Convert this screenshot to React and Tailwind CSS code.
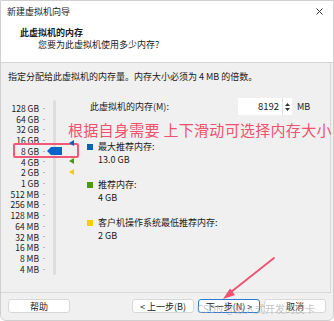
const SIZES = ["128 GB", "64 GB", "32 GB", "16 GB", "8 GB", "4 GB", "2 GB", "1 GB", "512 MB", "256 MB", "128 MB", "64 MB", "32 MB", "16 MB", "8 MB", "4 MB"];

const LEGEND = [
  { color: "bg-[#0a5fb4]", label: "最大推荐内存:", value: "13.0 GB", gap: "mt-0" },
  { color: "bg-[#4a9a0c]", label: "推荐内存:", value: "4 GB", gap: "mt-[12px]" },
  { color: "bg-[#f5cc00]", label: "客户机操作系统最低推荐内存:", value: "2 GB", gap: "mt-[12px]" },
];

function Btn({ children, focus }) {
  return (
    <button
      className={
        "h-[14px] w-[62px] rounded-[3px] bg-white text-[9px] leading-none text-[#222] " +
        (focus ? "border border-[#2a79d4]" : "border border-[#d8d8d8]")
      }
    >
      {children}
    </button>
  );
}

function Marker({ fill, top }) {
  return (
    <svg className={"absolute left-[68px] " + top} width="5" height="6" viewBox="0 0 5 6">
      <path d="M5 0V6L0 3Z" fill={fill} />
    </svg>
  );
}

export default function App() {
  return (
    <div
      className="relative flex h-[321px] w-[334px] flex-col overflow-hidden rounded-b-[6px] border border-[#cfcfcf] bg-[#f0f0f0] text-[9px] text-[#1a1a1a]"
      style={{ fontFamily: '"Noto Sans CJK SC", "Noto Sans", sans-serif' }}
    >
      {/* title bar */}
      <div className="flex h-[20px] shrink-0 items-center justify-between bg-white pl-[6px] pr-[10px]">
        <span className="text-[9px] leading-none">新建虚拟机向导</span>
        <svg width="7" height="7" viewBox="0 0 7 7" className="text-[#333]">
          <path d="M0.5 0.5L6.5 6.5M6.5 0.5L0.5 6.5" stroke="currentColor" strokeWidth="1" />
        </svg>
      </div>

      {/* header */}
      <div className="h-[42px] shrink-0 border-b border-[#d4d4d4] bg-white pl-[19px] pt-[6px] leading-[12px]">
        <p className="font-bold">此虚拟机的内存</p>
        <p className="pl-[18px]">您要为此虚拟机使用多少内存?</p>
      </div>

      {/* body */}
      <div className="mr-[2px] flex flex-1 flex-col border-b border-r border-[#d8d8d8]">
        <p className="pl-[7px] pt-[8px] leading-[12px]">指定分配给此虚拟机的内存量。内存大小必须为 4 MB 的倍数。</p>

        <div className="mt-[20px] flex">
          {/* slider column */}
          <div className="relative flex w-[80px] shrink-0">
            <div className="flex w-[38px] flex-col items-end">
              {SIZES.map((s) => (
                <span key={s} className="h-[10.73px] whitespace-nowrap text-[8.5px] leading-[10.73px] text-[#222]">{s}</span>
              ))}
            </div>
            <div className="ml-[4px] flex flex-col">
              {SIZES.map((s) => (
                <div key={s} className="flex h-[10.73px] items-center">
                  <div className="h-px w-[2px] bg-[#b8b8b8]" />
                </div>
              ))}
            </div>
            <div className="ml-[8px] mt-[-3px] h-[175px] w-[3px] rounded-[2px] bg-[#dedede]" />

            {/* overlays */}
            <div className="absolute left-[12px] top-[40px] h-[15px] w-[66px] rounded-[2px] border-2 border-[#f05a78]" />
            <svg className="absolute left-[46px] top-[44px]" width="15" height="8" viewBox="0 0 15 8">
              <path d="M4 0H15V8H4L0 4Z" fill="#0a63c9" />
            </svg>
            <Marker fill="#0a5fb4" top="top-[37px]" />
            <Marker fill="#4a9a0c" top="top-[55px]" />
            <Marker fill="#f5cc00" top="top-[66px]" />
          </div>

          {/* right content */}
          <div className="flex min-w-0 flex-1 flex-col">
            <div className="mt-[-5px] flex items-center pl-[9px]">
              <span className="w-[148px]">此虚拟机的内存(M):</span>
              <div className="flex h-[17px] items-center bg-white">
                <span className="w-[44px] pr-[3px] text-right text-[9.5px]">8192</span>
                <div className="flex h-[17px] w-[10px] flex-col items-center justify-center gap-[2px] border-l border-[#e0e0e0]">
                  <svg width="5" height="3" viewBox="0 0 5 3"><path d="M0 3L2.5 0L5 3Z" fill="#333" /></svg>
                  <svg width="5" height="3" viewBox="0 0 5 3"><path d="M0 0L2.5 3L5 0Z" fill="#333" /></svg>
                </div>
              </div>
              <span className="ml-[5px]">MB</span>
            </div>

            <p className="ml-[-13px] mt-[5px] whitespace-nowrap text-[15px] leading-[20px] tracking-[0.3px] text-[#f2506e]">根据自身需要 上下滑动可选择内存大小</p>

            <div className="flex flex-col pl-[6px]">
              {LEGEND.map((l) => (
                <div key={l.label} className={"flex " + l.gap}>
                  <div className={"mt-[4px] h-[6px] w-[6px] shrink-0 " + l.color} />
                  <div className="ml-[5px] flex flex-col leading-[13px]">
                    <span>{l.label}</span>
                    <span>{l.value}</span>
                  </div>
                </div>
              ))}
            </div>
          </div>
        </div>
      </div>

      {/* footer */}
      <div className="flex h-[27px] shrink-0 items-start px-[7px] pt-[6px]">
        <Btn>帮助</Btn>
        <div className="ml-auto flex gap-[4px]">
          <Btn>&lt; 上一步(B)</Btn>
          <Btn focus>下一步(N) &gt;</Btn>
          <Btn>取消</Btn>
        </div>
      </div>

      {/* annotation arrow */}
      <svg className="pointer-events-none absolute left-[215px] top-[255px]" width="62" height="50" viewBox="0 0 62 50">
        <path d="M58 2L15 36" stroke="#f2506e" strokeWidth="1.8" strokeLinecap="round" />
        <path d="M7 43L19 39L14 32.5Z" fill="#f2506e" />
      </svg>

      {/* watermark */}
      <span className="pointer-events-none absolute left-[196px] top-[301px] whitespace-nowrap text-[10px] leading-[14px] text-[#a8a8a8]/70">
        CSDN @嵌入式开发的皮卡
      </span>
    </div>
  );
}
